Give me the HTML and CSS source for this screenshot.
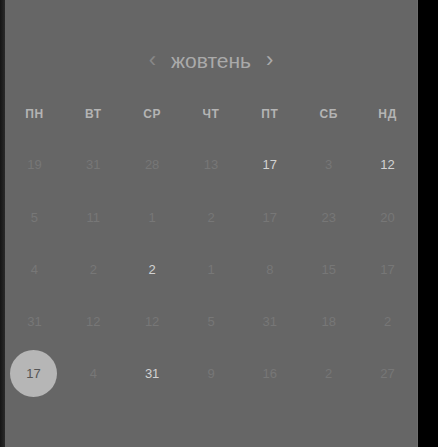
FILE: index.html
```html
<!DOCTYPE html>
<html lang="uk">
<head>
    <meta charset="UTF-8">
    <meta name="viewport" content="width=device-width, initial-scale=1.0">
    <title>Календар</title>
    <link rel="stylesheet" href="styles.css">
</head>
<body>
    <div class="edge"></div>
    <div class="calendar">
        <div class="month">
            <span class="arrow">&#8249;</span>
            <span class="month-name">жовтень</span>
            <span class="arrow next">&#8250;</span>
        </div>
        <div class="grid">
            <div class="head">ПН</div>
            <div class="head">ВТ</div>
            <div class="head">СР</div>
            <div class="head">ЧТ</div>
            <div class="head">ПТ</div>
            <div class="head">СБ</div>
            <div class="head">НД</div>

            <div class="day">19</div>
            <div class="day">31</div>
            <div class="day">28</div>
            <div class="day">13</div>
            <div class="day on">17</div>
            <div class="day">3</div>
            <div class="day on">12</div>

            <div class="day">5</div>
            <div class="day">11</div>
            <div class="day">1</div>
            <div class="day">2</div>
            <div class="day">17</div>
            <div class="day">23</div>
            <div class="day">20</div>

            <div class="day">4</div>
            <div class="day">2</div>
            <div class="day on">2</div>
            <div class="day">1</div>
            <div class="day">8</div>
            <div class="day">15</div>
            <div class="day">17</div>

            <div class="day">31</div>
            <div class="day">12</div>
            <div class="day">12</div>
            <div class="day">5</div>
            <div class="day">31</div>
            <div class="day">18</div>
            <div class="day">2</div>

            <div class="day"><span class="selected">17</span></div>
            <div class="day">4</div>
            <div class="day on">31</div>
            <div class="day">9</div>
            <div class="day">16</div>
            <div class="day">2</div>
            <div class="day">27</div>
        </div>
    </div>
    <div class="side"></div>
</body>
</html>
```

FILE: styles.css
```css
html, body {
    height: 100%;
}
body {
    margin: 0;
    display: flex;
    background-color: #000;
    font-family: "Liberation Sans", Arial, sans-serif;
    overflow: hidden;
}
.edge {
    width: 5px;
    background: linear-gradient(to right, #151515, #2a2a2a);
}
.calendar {
    width: 412px;
    background-color: #666;
    border-right: 1px solid #6e6e6e;
    padding-top: 48px;
}
.side {
    flex: 1;
    background-color: #000;
}
.month {
    display: flex;
    justify-content: center;
    align-items: center;
    height: 26px;
    color: #aaa;
}
.month-name {
    font-size: 21px;
    margin: 0 15px;
}
.arrow {
    font-size: 22px;
    color: #888;
    line-height: 1;
    margin-top: -3px;
}
.arrow.next {
    color: #aaa;
}
.grid {
    display: grid;
    grid-template-columns: repeat(7, 1fr);
    grid-template-rows: 49px 53px repeat(4, 52px);
    margin-top: 15px;
}
.head {
    display: flex;
    justify-content: center;
    align-items: center;
    font-size: 12px;
    font-weight: bold;
    color: #b4b4b4;
    letter-spacing: 0.6px;
}
.day {
    display: flex;
    justify-content: center;
    align-items: center;
    font-size: 13px;
    color: #777;
}
.day.on {
    color: #d2d2d2;
}
.selected {
    display: flex;
    justify-content: center;
    align-items: center;
    width: 47px;
    height: 47px;
    border-radius: 50%;
    background-color: #b6b6b6;
    color: #555;
    margin-left: -2px;
}
```
